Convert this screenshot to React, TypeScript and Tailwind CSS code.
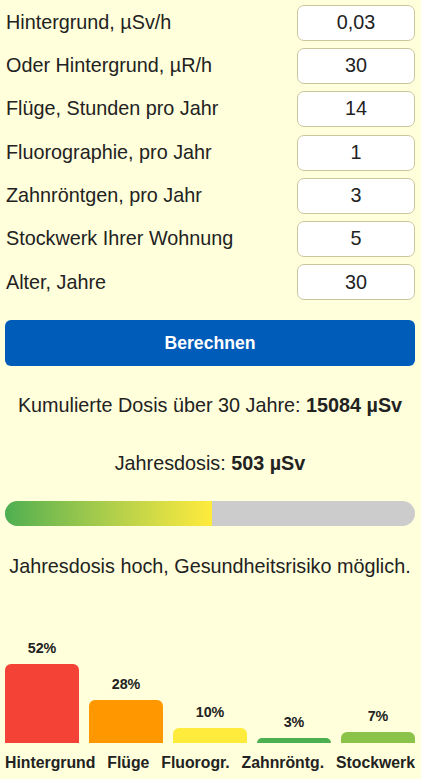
import React from 'react';

const fields = [
  { label: 'Hintergrund, µSv/h', value: '0,03' },
  { label: 'Oder Hintergrund, µR/h', value: '30' },
  { label: 'Flüge, Stunden pro Jahr', value: '14' },
  { label: 'Fluorographie, pro Jahr', value: '1' },
  { label: 'Zahnröntgen, pro Jahr', value: '3' },
  { label: 'Stockwerk Ihrer Wohnung', value: '5' },
  { label: 'Alter, Jahre', value: '30' },
];

const bars = [
  { pct: 52, h: 79, color: 'bg-[#f44336]' },
  { pct: 28, h: 42.5, color: 'bg-[#ff9800]' },
  { pct: 10, h: 15.2, color: 'bg-[#ffeb3b]' },
  { pct: 3, h: 4.7, color: 'bg-[#4caf50]' },
  { pct: 7, h: 10.5, color: 'bg-[#8bc34a]' },
];

const names = ['Hintergrund', 'Flüge', 'Fluorogr.', 'Zahnröntg.', 'Stockwerk'];

export default function App() {
  return (
    <div className="w-[421px] h-[779px] overflow-hidden bg-[#ffffdb] text-[#222] font-['Liberation_Sans',Arial,sans-serif] pl-[5px] pr-[6px] pt-[4.7px]">
      {/* Inputs */}
      <div className="flex flex-col gap-[7.3px]">
        {fields.map((f) => (
          <div key={f.label} className="flex items-center justify-between h-[36px]">
            <span className="text-[19.8px] leading-none pl-[1px]">{f.label}</span>
            <div className="w-[118px] h-[36px] bg-white border border-[#cbc79c] rounded-[7px] flex items-center justify-center text-[19.8px]">
              {f.value}
            </div>
          </div>
        ))}
      </div>

      <button className="mt-[19.7px] w-full h-[45.7px] rounded-[6px] bg-[#005cb9] text-white font-bold text-[17.6px]">
        Berechnen
      </button>

      {/* Results */}
      <p className="mt-[27.8px] text-center text-[19.8px] leading-[23px]">
        Kumulierte Dosis über 30 Jahre: <b>15084 µSv</b>
      </p>
      <p className="mt-[35px] text-center text-[19.8px] leading-[23px]">
        Jahresdosis: <b>503 µSv</b>
      </p>

      <div className="mt-[26.2px] h-[25.3px] rounded-full bg-[#cccccc] overflow-hidden">
        <div className="h-full w-[50.4%] bg-gradient-to-r from-[#4caf50] to-[#ffeb3b]" />
      </div>

      <p className="mt-[29.2px] text-center text-[19.8px] leading-[23px]">
        Jahresdosis hoch, Gesundheitsrisiko möglich.
      </p>

      {/* Chart */}
      <div className="mt-[0.5px] h-[164px] flex items-end gap-[10px]">
        {bars.map((b) => (
          <div key={b.pct} className="flex-1 flex flex-col items-center">
            <span className="font-bold text-[14.3px] leading-[16px] mb-[8px]">{b.pct}%</span>
            <div className={`w-full rounded-t-[6px] ${b.color}`} style={{ height: b.h }} />
          </div>
        ))}
      </div>
      <div className="mt-[11.6px] flex justify-between">
        {names.map((n) => (
          <span key={n} className="font-bold text-[15.8px] leading-[18px]">{n}</span>
        ))}
      </div>
    </div>
  );
}
